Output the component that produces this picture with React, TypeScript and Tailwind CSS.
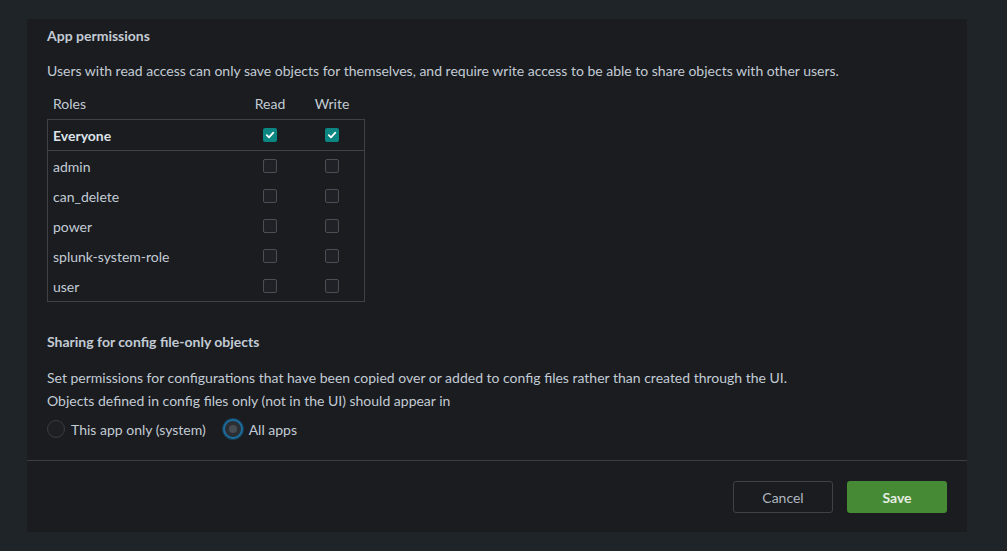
const roles = ['admin', 'can_delete', 'power', 'splunk-system-role', 'user']

function Checkbox({ checked }: { checked?: boolean }) {
  if (checked) {
    return (
      <span className="flex h-[14px] w-[14px] items-center justify-center rounded-[2px] bg-[#0b8683]">
        <svg width="10" height="10" viewBox="0 0 10 10" fill="none">
          <path d="M1.8 5.2 L4 7.3 L8.3 2.6" stroke="#ffffff" strokeWidth="1.8" strokeLinecap="round" strokeLinejoin="round" />
        </svg>
      </span>
    )
  }
  return <span className="block h-[14px] w-[14px] rounded-[2px] border border-[#4a4e55] bg-[#1f2126]" />
}

function RoleRow({ name, bold, checked, first }: { name: string; bold?: boolean; checked?: boolean; first?: boolean }) {
  return (
    <div
      className={`grid h-[30px] grid-cols-[191px_62px_62px] items-center ${first ? 'h-[31px] border-b border-[#3e4147]' : ''}`}
    >
      <span className={`pl-[5px] ${bold ? 'font-bold text-[#dde3e8]' : ''}`}>{name}</span>
      <span className="flex justify-center">
        <Checkbox checked={checked} />
      </span>
      <span className="flex justify-center">
        <Checkbox checked={checked} />
      </span>
    </div>
  )
}

export default function App() {
  return (
    <div
      className="h-[551px] w-full bg-[#1f2429] pt-[19px] pl-[27px] text-[14px] text-[#c3cbd4]"
      style={{ fontFamily: 'Lato, "Open Sans", sans-serif' }}
    >
      <div className="flex h-[513px] w-[940px] flex-col bg-[#1a1c20]">
        <div className="px-5 pt-[8px]">
          <h3 className="h-[18px] text-[14px] leading-[18px] font-bold text-[#c3cbd4]">App permissions</h3>
          <p className="mt-[17px] leading-[18px]">
            Users with read access can only save objects for themselves, and require write access to be able to share objects with other users.
          </p>

          <div className="mt-[15px] grid h-[18px] w-[318px] grid-cols-[192px_62px_62px] items-center leading-[18px]">
            <span className="pl-[6px]">Roles</span>
            <span className="text-center">Read</span>
            <span className="text-center">Write</span>
          </div>
          <div className="mt-[6px] w-[318px] border border-[#3e4147]">
            <RoleRow name="Everyone" bold checked first />
            {roles.map((r) => (
              <RoleRow key={r} name={r} />
            ))}
          </div>

          <h3 className="mt-[31px] h-[18px] text-[14px] leading-[18px] font-bold">Sharing for config file-only objects</h3>
          <p className="mt-[18px] leading-[18px]">
            Set permissions for configurations that have been copied over or added to config files rather than created through the UI.
          </p>
          <p className="mt-[5px] leading-[18px]">Objects defined in config files only (not in the UI) should appear in</p>

          <div className="mt-[9px] flex h-[20px] items-center">
            <label className="flex items-center gap-[6px]">
              <span className="block h-[18px] w-[18px] rounded-full border border-[#3a3d42] bg-[#1d1f23]" />
              <span>This app only (system)</span>
            </label>
            <label className="ml-[17px] flex items-center gap-[6px]">
              <span className="flex h-[20px] w-[20px] items-center justify-center rounded-full border-2 border-[#1c6c9c] bg-[#2b2e33] shadow-[0_0_0_1px_#173d55]">
                <span className="block h-[8px] w-[8px] rounded-full bg-[#474b52]" />
              </span>
              <span>All apps</span>
            </label>
          </div>
        </div>

        <div className="mt-auto border-t border-[#3a3d42] px-5 pt-[20px] pb-[19px]">
          <div className="flex justify-end gap-[14px]">
            <button className="h-[32px] w-[100px] rounded-[3px] border border-[#3e4147] text-[14px] text-[#aeb6be]">
              Cancel
            </button>
            <button className="h-[32px] w-[100px] rounded-[3px] bg-[#468a36] text-[14px] font-bold text-[#e6ede2]">
              Save
            </button>
          </div>
        </div>
      </div>
    </div>
  )
}
